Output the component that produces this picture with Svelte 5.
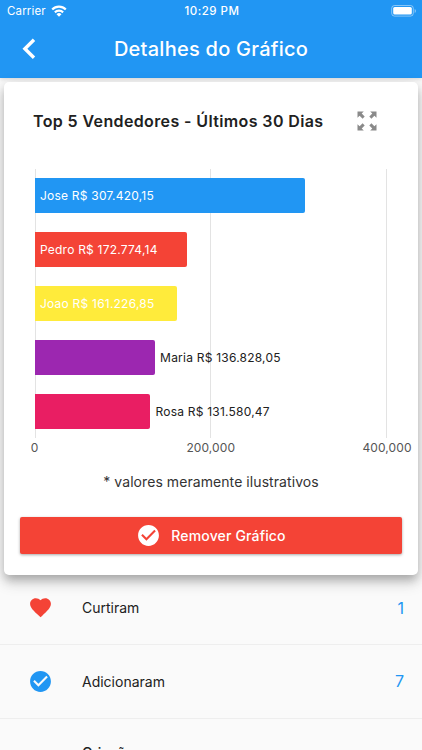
<script lang="ts">
  interface Seller {
    name: string;
    value: number;
    color: string;
  }

  const axisMax = 400000;
  const ticks = [0, 200000, 400000];

  const sellers: Seller[] = [
    { name: 'Jose', value: 307420.15, color: '#2196f3' },
    { name: 'Pedro', value: 172774.14, color: '#f44336' },
    { name: 'Joao', value: 161226.85, color: '#ffeb3b' },
    { name: 'Maria', value: 136828.05, color: '#9c27b0' },
    { name: 'Rosa', value: 131580.47, color: '#e91e63' },
  ];

  function getWidth(seller: Seller): number {
    return (seller.value / axisMax) * 100;
  }

  // The label goes inside the bar only when there is room for it
  function fitsInside(seller: Seller): boolean {
    return seller.value > 150000;
  }

  function getLabel(seller: Seller): string {
    const [whole, cents] = seller.value.toFixed(2).split('.');
    return `${seller.name} R$ ${whole.replace(/\B(?=(\d{3})+$)/g, '.')},${cents}`;
  }
</script>

{#snippet checkCircle()}
  <svg viewBox="0 0 24 24" width="25" height="25" fill="currentColor">
    <path d="M12 2C6.480 2 2 6.480 2 12s4.480 10 10 10 10-4.480 10-10S17.520 2 12 2zm-2 15l-5-5 1.410-1.410L10 14.170l7.590-7.590L19 8l-9 9z" />
  </svg>
{/snippet}

<div class="screen">
  <header>
    <div class="status-bar">
      <div class="carrier">
        <span>Carrier</span>
        <svg viewBox="0 0 16 12" width="16" height="12" fill="none" stroke="#fff" stroke-width="2.200">
          <path d="M1.200 4.500a9.600 9.600 0 0 1 13.600 0" />
          <path d="M3.900 7.400a5.800 5.800 0 0 1 8.200 0" />
          <path d="M8 11.800L5.500 9.200a3.500 3.500 0 0 1 5 0z" fill="#fff" stroke="none" />
        </svg>
      </div>
      <div class="time">10:29 PM</div>
      <svg class="battery" viewBox="0 0 26 12" width="26" height="12">
        <rect x="0.700" y="0.500" width="21.600" height="10.600" rx="2.800" fill="none" stroke="#fff" stroke-opacity="0.450" />
        <rect x="2.200" y="2" width="18.600" height="7.600" rx="1.500" fill="#fff" />
        <path d="M23.700 4v4q1.200-.6 1.200-2t-1.200-2z" fill="#fff" fill-opacity="0.500" />
      </svg>
    </div>
    <div class="nav-bar">
      <button class="back" aria-label="Voltar">
        <svg viewBox="0 0 14 22" width="14" height="22" fill="none" stroke="#fff" stroke-width="3.400">
          <path d="M12 1.700L2.900 10.700l9.100 9" />
        </svg>
      </button>
      <h1>Detalhes do Gráfico</h1>
    </div>
  </header>

  <section class="card">
    <div class="card-header">
      <h2>Top 5 Vendedores - Últimos 30 Dias</h2>
      <svg viewBox="0 0 20 20" width="20" height="20" fill="#8a8a8a">
        <path d="M.5 .5h6.300L4.700 2.600l3 3-2.100 2.100-3-3L.5 6.800z" />
        <path d="M19.500 .5v6.300l-2.100-2.100-3 3-2.100-2.100 3-3L13.200 .5z" />
        <path d="M19.500 19.500h-6.300l2.100-2.100-3-3 2.100-2.100 3 3 2.100-2.100z" />
        <path d="M.5 19.500v-6.300l2.100 2.100 3-3 2.100 2.100-3 3 2.100 2.100z" />
      </svg>
    </div>

    <div class="chart">
      <div class="plot">
        <div class="grid-lines">
          {#each ticks as tick (tick)}
            <span></span>
          {/each}
        </div>
        <div class="bars">
          {#each sellers as seller}
            <div class="bar-row">
              <div class="bar" style="width: {getWidth(seller)}%; background: {seller.color}">
                {#if fitsInside(seller)}<span>{getLabel(seller)}</span>{/if}
              </div>
              {#if !fitsInside(seller)}
                <span class="outside">{getLabel(seller)}</span>
              {/if}
            </div>
          {/each}
        </div>
      </div>
      <div class="axis">
        {#each ticks as tick}
          <span>{tick.toLocaleString('en-US')}</span>
        {/each}
      </div>
    </div>

    <p class="note">* valores meramente ilustrativos</p>

    <button class="remove">
      {@render checkCircle()}
      <span>Remover Gráfico</span>
    </button>
  </section>

  <ul class="stats">
    <li>
      <span class="icon liked">
        <svg viewBox="0 0 24 24" width="25" height="25" fill="currentColor">
          <path d="M12 21.350l-1.450-1.320C5.400 15.360 2 12.280 2 8.500 2 5.420 4.420 3 7.500 3c1.740 0 3.410.81 4.500 2.090C13.090 3.810 14.760 3 16.500 3 19.580 3 22 5.420 22 8.500c0 3.780-3.400 6.860-8.550 11.540L12 21.350z" />
        </svg>
      </span>
      <span class="label">Curtiram</span>
      <span class="count">1</span>
    </li>
    <li>
      <span class="icon added">{@render checkCircle()}</span>
      <span class="label">Adicionaram</span>
      <span class="count">7</span>
    </li>
    <li class="created">
      <span class="icon"></span>
      <span class="label">Criação</span>
    </li>
  </ul>
</div>

<style>
  .screen {
    height: 750px;
    overflow: hidden;
    display: flex;
    flex-direction: column;
    background: #fafafa;
    color: #212121;
    font-family: Inter, Roboto, sans-serif;
  }

  h1,
  h2,
  p,
  ul {
    margin: 0;
    padding: 0;
  }

  button {
    border: none;
    padding: 0;
    background: none;
    font-family: inherit;
    color: #fff;
  }

  svg {
    display: block;
    flex: none;
  }

  header {
    flex: none;
    height: 78px;
    background: #2196f3;
    color: #fff;
    box-shadow: 0 1px 4px rgba(0, 0, 0, 0.15);
  }

  .status-bar {
    display: grid;
    grid-template-columns: 1fr auto 1fr;
    align-items: center;
    height: 22px;
    padding: 0 5px 0 7px;
    font-size: 11.5px;
  }

  .carrier {
    display: flex;
    align-items: center;
    gap: 5px;
    letter-spacing: 0.15px;
  }

  .time {
    font-weight: 500;
    letter-spacing: 0.5px;
  }

  .battery {
    justify-self: end;
  }

  .nav-bar {
    display: grid;
    grid-template-columns: 60px 1fr 60px;
    align-items: center;
    height: 54px;
  }

  .back {
    padding-left: 22px;
  }

  h1 {
    text-align: center;
    font-size: 20px;
    font-weight: 500;
    letter-spacing: 0.25px;
  }

  .card {
    flex: none;
    box-sizing: border-box;
    height: 493px;
    margin: 4px 4px 0;
    padding: 0 16px;
    border-radius: 5px;
    background: #fff;
    box-shadow:
      0 6px 8px -2px rgba(0, 0, 0, 0.18),
      0 8px 14px 1px rgba(0, 0, 0, 0.12),
      0 3px 14px 1px rgba(0, 0, 0, 0.1);
    z-index: 1;
  }

  .card-header {
    display: flex;
    align-items: center;
    justify-content: space-between;
    height: 77px;
    padding: 0 25px 0 13px;
  }

  h2 {
    font-size: 16px;
    font-weight: 600;
    letter-spacing: 0.38px;
    white-space: nowrap;
  }

  .chart {
    padding: 10px 15px 0 14.5px;
  }

  .plot {
    display: grid;
    height: 269px;
  }

  .grid-lines,
  .bars {
    grid-area: 1 / 1;
  }

  .grid-lines {
    display: flex;
    justify-content: space-between;
  }

  .grid-lines span {
    width: 1px;
    background: #e3e3e3;
  }

  .bars {
    display: flex;
    flex-direction: column;
    justify-content: space-around;
    font-size: 12px;
    letter-spacing: 0.22px;
  }

  .bar-row {
    display: flex;
    align-items: center;
    height: 35px;
    white-space: nowrap;
  }

  .bar {
    box-sizing: border-box;
    display: flex;
    align-items: center;
    height: 100%;
    padding-left: 5.5px;
    border-radius: 0 2px 2px 0;
    color: #fff;
  }

  .outside {
    padding-left: 5px;
  }

  .axis {
    display: flex;
    justify-content: space-between;
    margin: 2px -25px 0 -25px;
    font-size: 12px;
    line-height: 15px;
    letter-spacing: 0.1px;
    color: #555;
  }

  .axis span {
    width: 50px;
    text-align: center;
  }

  .note {
    margin-top: 18px;
    text-align: center;
    font-size: 14px;
    line-height: 18px;
    letter-spacing: 0.07px;
    color: #333;
  }

  .remove {
    display: flex;
    align-items: center;
    justify-content: center;
    gap: 10px;
    width: 100%;
    height: 37px;
    margin-top: 26px;
    border-radius: 2px;
    background: #f44336;
    box-shadow: 0 1px 3px rgba(0, 0, 0, 0.35);
    font-size: 14px;
    font-weight: 500;
    letter-spacing: 0.15px;
  }

  .stats {
    list-style: none;
    margin-top: -3.5px;
  }

  .stats li {
    box-sizing: border-box;
    display: flex;
    align-items: center;
    height: 73.5px;
    padding: 0 18px 0 28px;
    border-bottom: 1px solid #eee;
    font-size: 14px;
  }

  .stats .created {
    height: 69px;
    font-weight: 500;
  }

  .icon {
    width: 54px;
  }

  .liked {
    color: #f44336;
  }

  .added {
    color: #2196f3;
  }

  .label {
    flex: 1;
  }

  .count {
    font-size: 16px;
    color: #2196f3;
  }
</style>
